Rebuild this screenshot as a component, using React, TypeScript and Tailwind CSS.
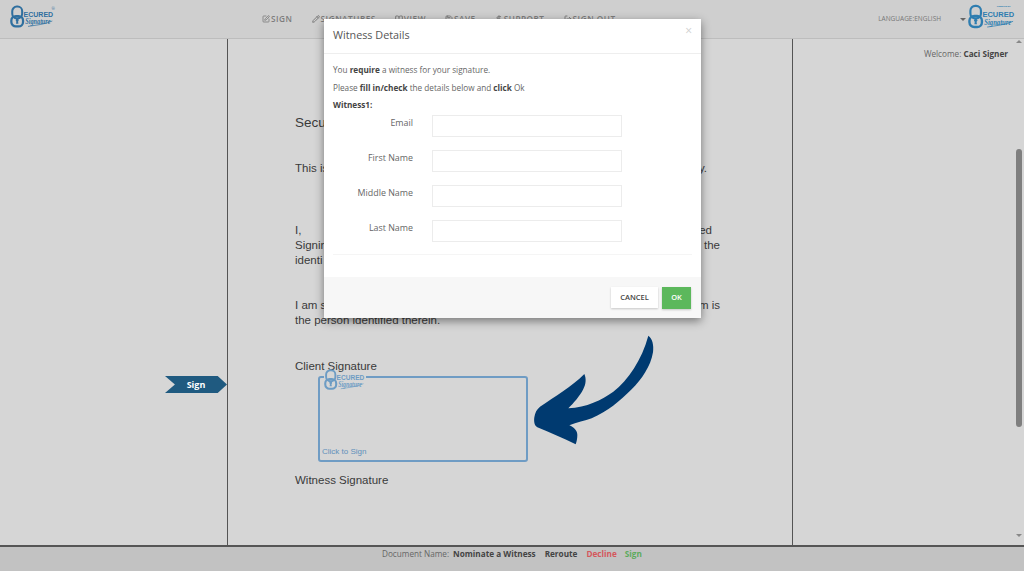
import { Pencil, SquarePen, BookOpen, Save, DollarSign, LogOut } from "lucide-react";

function Logo({ className = "", powered = false, reg = false, color = "#2f6f9f" }: { className?: string; powered?: boolean; reg?: boolean; color?: string }) {
  return (
    <svg viewBox="0 0 100 50" className={`overflow-visible ${className}`}>
      <rect x="5" y="3" width="22" height="26" rx="10" fill="none" stroke={color} strokeWidth="4.5" />
      <rect x="3" y="24" width="26" height="23" rx="10" fill="none" stroke={color} strokeWidth="5" />
      <circle cx="16" cy="33" r="3.4" fill={color} />
      <path d="M14.5 34h3l1.2 7h-5.4z" fill={color} />
      <text x="30" y="25" fontFamily="'Liberation Sans', sans-serif" fontWeight="700" fontSize="16" fill={color} textLength="66" lengthAdjust="spacingAndGlyphs">ECURED</text>
      <text x="34" y="42" fontFamily="'Liberation Serif', serif" fontStyle="italic" fontWeight="700" fontSize="18" fill={color} textLength="56" lengthAdjust="spacingAndGlyphs">Signature</text>
      <path d="M40 47 C58 44 76 43 94 35" fill="none" stroke={color} strokeWidth="1.6" />
      {powered && <text x="60" y="6" fontFamily="'Open Sans', sans-serif" fontWeight="700" fontSize="5" fill={color}>Powered by</text>}
      {reg && <text x="92" y="10" fontFamily="'Open Sans', sans-serif" fontSize="9" fill={color}>®</text>}
    </svg>
  );
}

function NavItem({ icon, label }: { icon: React.ReactNode; label: string }) {
  return (
    <span className="flex items-center gap-[1px]">
      {icon}
      <span>{label}</span>
    </span>
  );
}

function Row({ left, right }: { left: string; right?: string }) {
  return (
    <div className="flex justify-between">
      <span>{left}</span>
      {right && <span>{right}</span>}
    </div>
  );
}

function Field({ label }: { label: string }) {
  return (
    <div className="flex items-start h-[35px]">
      <label className="w-[80px] text-right text-[8.9px] leading-[14px] text-[#666] pt-[1px]">{label}</label>
      <input className="ml-[19px] w-[190px] h-[22px] border border-[#ececec] bg-white outline-none" />
    </div>
  );
}

export default function App() {
  return (
    <div className="relative flex flex-col h-[571px] w-[1024px] overflow-hidden bg-[#d6d6d6] font-['Open_Sans',sans-serif]">
      {/* Top bar */}
      <header className="flex items-center h-[39px] shrink-0 bg-[#cfcfcf] border-b border-[#bdbdbd] pl-[10px] pr-[8px]">
        <Logo reg className="w-[45px] h-[23px] mt-[-6px]" />
        <nav className="flex items-center ml-[207px] gap-[19px] text-[8.2px] font-semibold tracking-[0.55px] text-[#7d7d7d]">
          <NavItem icon={<SquarePen size={8} strokeWidth={2.5} />} label="SIGN" />
          <NavItem icon={<Pencil size={8} strokeWidth={3} />} label="SIGNATURES" />
          <NavItem icon={<BookOpen size={8} strokeWidth={3} />} label="VIEW" />
          <NavItem icon={<Save size={8} strokeWidth={3} />} label="SAVE" />
          <NavItem icon={<DollarSign size={8} strokeWidth={3} />} label="SUPPORT" />
          <NavItem icon={<LogOut size={8} strokeWidth={3} />} label="SIGN OUT" />
        </nav>
        <span className="ml-auto text-[6.5px] text-[#777]">LANGUAGE:ENGLISH</span>
        <span className="ml-[19px] w-0 h-0 border-x-[3px] border-x-transparent border-t-[3px] border-t-[#666]" />
        <Logo powered className="ml-[2px] w-[48px] h-[25px] mt-[-6px]" color="#2e7db0" />
      </header>

      {/* Main */}
      <main className="flex flex-1 min-h-0">
        <aside className="w-[227px] shrink-0 flex justify-end pt-[337px]">
          <div className="w-[62px] h-[17px] bg-[#1f5a80] flex items-center justify-center text-white text-[9px] font-bold [clip-path:polygon(0_0,85%_0,100%_50%,85%_100%,0_100%,16%_50%)]">
            Sign
          </div>
        </aside>

        <section className="w-[566px] shrink-0 border-x border-[#555] pl-[67px] pr-[72px] pt-[75px] font-['Liberation_Sans',sans-serif] text-[#3a3a3a] text-[11.5px] leading-[15px]">
          <div className="text-[13.5px] leading-[18px]">Secured Signing</div>
          <div className="mt-[29px] pr-[13px]"><Row left="This is" right="y." /></div>
          <div className="mt-[47px]">
            <div className="pr-[8px]"><Row left="I," right="ed" /></div>
            <Row left="Signing" right="n the" />
            <Row left="identi" />
          </div>
          <div className="mt-[30px]">
            <Row left="I am s" right="m is" />
            <Row left="the person identified therein." />
          </div>
          <div className="mt-[30px] leading-[16px]">Client Signature</div>
          <div className="relative mt-[2px] ml-[23px] w-[210px] h-[86px] border-2 border-[#6f9cc4] rounded-[3px]">
            <span className="absolute left-[4px] top-[-2px] w-[42px] h-[3px] bg-[#d6d6d6]" />
            <Logo className="absolute left-[4px] top-[-9px] w-[42px] h-[21px]" color="#6d9cc4" />
            <span className="absolute left-[2px] bottom-[3px] text-[8px] leading-[10px] text-[#5f90bb]">Click to Sign</span>
          </div>
          <div className="mt-[10px] leading-[16px]">Witness Signature</div>
        </section>

        <aside className="flex-1 pt-[8px] pr-[7px] text-right text-[8.2px] leading-[13px] text-[#666]">
          Welcome: <b className="text-[#444]">Caci Signer</b>
        </aside>

        <div className="w-[8px] shrink-0 flex flex-col items-center pt-[1px] pb-[8px] mr-[1px]">
          <span className="w-0 h-0 border-x-[3px] border-x-transparent border-b-[3px] border-b-[#888]" />
          <span className="w-[6px] h-[278px] mt-[106px] rounded-[3px] bg-[#7f7f7f]" />
          <span className="mt-auto w-0 h-0 border-x-[3px] border-x-transparent border-t-[3px] border-t-[#888]" />
        </div>
      </main>

      {/* Footer */}
      <footer className="h-[26px] shrink-0 bg-[#c2c2c2] border-t-2 border-[#555] flex items-center pl-[382px] pb-[9px] text-[8.2px] text-[#666]">
        <span>Document Name:</span>
        <b className="ml-[4px] text-[#444]">Nominate a Witness</b>
        <b className="ml-[9px] text-[#444]">Reroute</b>
        <b className="ml-[9px] text-[#d4575c]">Decline</b>
        <b className="ml-[8px] text-[#5cab5c]">Sign</b>
      </footer>

      {/* Arrow overlay */}
      <svg viewBox="0 0 480 390" className="absolute left-[520px] top-[320px] w-[160px] h-[130px]">
        <path
          d="M385 47 C397 55 402 75 399 97 C392 140 365 178 335 208 C300 243 262 275 215 295 C195 302 170 308 148 316 C162 322 172 332 172 345 C172 355 170 365 167 373 C130 355 90 338 52 322 C44 318 41 305 43 292 C45 278 50 268 60 260 C105 230 155 200 193 162 C199 175 198 192 190 207 C180 228 160 250 145 265 C200 262 245 240 280 215 C325 180 365 120 385 47 Z"
          fill="#003a70"
        />
      </svg>

      {/* Modal */}
      <div className="absolute left-[324px] top-[19px] w-[377px] h-[299px] flex flex-col bg-white shadow-[0_3px_9px_rgba(0,0,0,0.45)]">
        <div className="flex items-start justify-between h-[35px] shrink-0 border-b border-[#eeeeee] pl-[9px] pr-[9px]">
          <h2 className="mt-[7px] text-[10.8px] leading-[18px] text-[#555]">Witness Details</h2>
          <span className="mt-[5px] text-[12px] leading-[14px] text-[#cfcfcf]">×</span>
        </div>
        <div className="flex-1 px-[9px] pt-[9px] text-[8.2px] leading-[13px] text-[#666]">
          <p>You <b className="text-[#444]">require</b> a witness for your signature.</p>
          <p className="mt-[5px]">Please <b className="text-[#444]">fill in/check</b> the details below and <b className="text-[#444]">click</b> Ok</p>
          <p className="mt-[4px] font-bold text-[#444]">Witness1:</p>
          <div className="mt-[4px]">
            <Field label="Email" />
            <Field label="First Name" />
            <Field label="Middle Name" />
            <Field label="Last Name" />
          </div>
          <div className="mt-[-1px] border-t border-[#f5f5f5]" />
        </div>
        <div className="h-[41px] shrink-0 bg-[#f7f7f7] flex items-center justify-end gap-[4px] pr-[10px] text-[7.5px] font-semibold">
          <button className="w-[47px] h-[21px] bg-white text-[#444] shadow-[0_1px_2px_rgba(0,0,0,0.2)]">CANCEL</button>
          <button className="w-[29px] h-[22px] bg-[#5cb85c] text-white shadow-[0_1px_2px_rgba(0,0,0,0.2)]">OK</button>
        </div>
      </div>
    </div>
  );
}
